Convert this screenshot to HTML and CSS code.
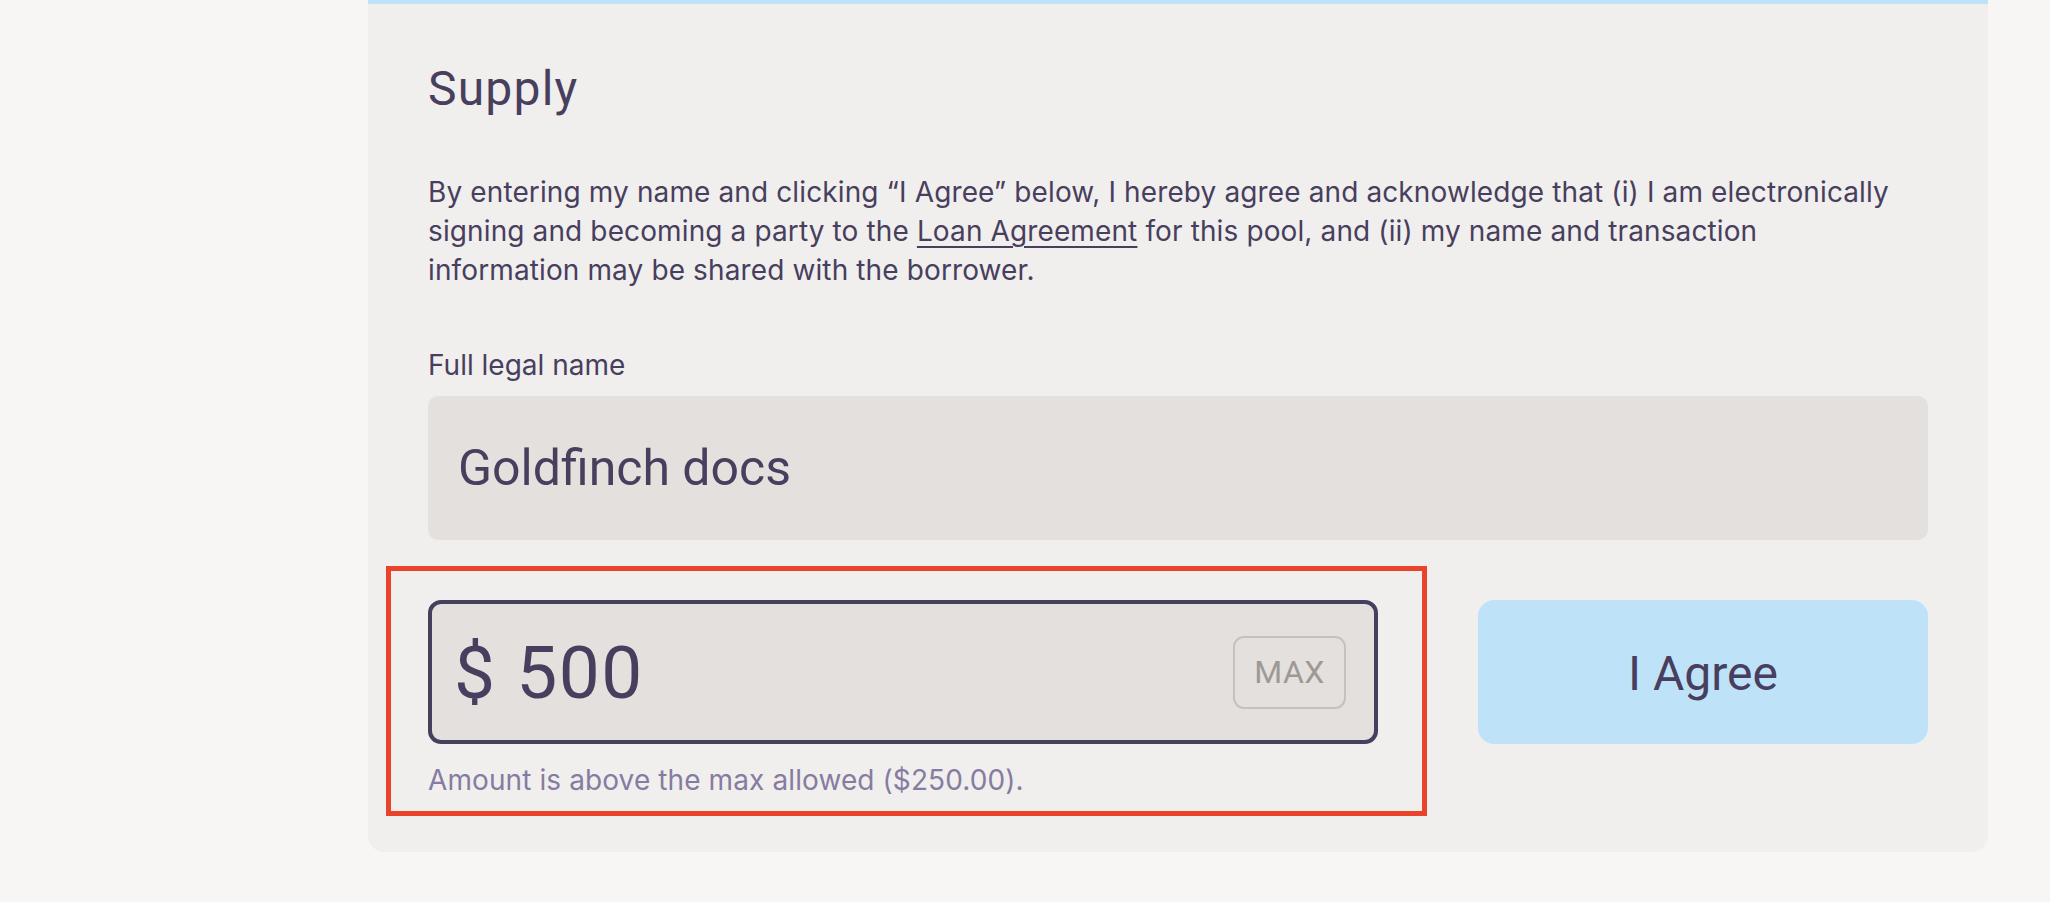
FILE: index.html
```html
<!DOCTYPE html>
<html lang="en">
<head>
<meta charset="utf-8">
<title>Supply</title>
<link rel="stylesheet" href="styles.css">
</head>
<body>
<div class="page">
  <aside class="sidebar"></aside>
  <section class="card">
    <h2 class="card-title">Supply</h2>
    <p class="terms">By entering my name and clicking “I Agree” below, I hereby agree and acknowledge that (i) I am electronically signing and becoming a party to the <a class="terms-link" href="#">Loan Agreement</a> for this pool, and (ii) my name and transaction information may be shared with the borrower.</p>
    <label class="field-label" for="legal-name">Full legal name</label>
    <div class="name-input" id="legal-name">Goldfinch docs</div>
    <div class="amount-row">
      <div class="amount-col highlight">
        <div class="amount-input">
          <span class="amount-value">$ 500</span>
          <span class="max-btn">MAX</span>
        </div>
        <div class="amount-error">Amount is above the max allowed ($250.00).</div>
      </div>
      <div class="agree-btn">I Agree</div>
    </div>
  </section>
</div>
</body>
</html>
```
FILE: styles.css
```css
html, body {
  margin: 0;
  padding: 0;
}
body {
  background: #f7f6f4;
  font-family: Roboto, "Liberation Sans", sans-serif;
  color: #483e5e;
  width: 2050px;
  height: 902px;
  overflow: hidden;
}
.page {
  display: grid;
  grid-template-columns: 368px 1620px;
  align-items: start;
}
.card {
  box-sizing: border-box;
  background: #f0efed;
  border-top: 4px solid #bee3f8;
  border-radius: 0 0 16px 16px;
  padding: 57px 60px 52px 60px;
}
.card-title {
  margin: 0 0 56px 0;
  font-size: 48px;
  line-height: 56px;
  font-weight: 400;
  letter-spacing: 1.2px;
}
.terms {
  margin: 0 0 56px 0;
  max-width: 1478px;
  font-family: Inter, Roboto, sans-serif;
  font-size: 28px;
  line-height: 39px;
  letter-spacing: 0.12px;
}
.terms-link {
  color: inherit;
  text-decoration: underline;
  text-decoration-thickness: 2px;
  text-underline-offset: 5px;
}
.field-label {
  display: block;
  font-family: Inter, Roboto, sans-serif;
  font-size: 28px;
  line-height: 39px;
  margin-bottom: 11px;
}
.name-input {
  box-sizing: border-box;
  height: 144px;
  background: #e3e0dd;
  border-radius: 10px;
  padding: 0 30px;
  display: flex;
  align-items: center;
  font-size: 50px;
}
.amount-row {
  margin-top: 60px;
  display: grid;
  grid-template-columns: 950px 450px;
  column-gap: 100px;
  align-items: start;
}
.amount-col {
  position: relative;
}
.highlight::after {
  content: "";
  position: absolute;
  top: -34px;
  left: -42px;
  right: -49px;
  bottom: -16px;
  border: 5px solid #e9442b;
  pointer-events: none;
}
.amount-input {
  box-sizing: border-box;
  height: 144px;
  background: #e3e0dd;
  border: 4px solid #483e5e;
  border-radius: 13px;
  padding: 0 28px 0 22px;
  display: flex;
  align-items: center;
  justify-content: space-between;
}
.amount-value {
  font-size: 73px;
  letter-spacing: 1.5px;
  line-height: 1;
  padding-top: 3px;
}
.max-btn {
  box-sizing: border-box;
  height: 73px;
  width: 113px;
  border: 2px solid #c6c1bc;
  border-radius: 11px;
  display: flex;
  align-items: center;
  justify-content: center;
  font-size: 32px;
  letter-spacing: 0.5px;
  color: #9e9994;
}
.amount-error {
  margin-top: 17px;
  font-family: Inter, Roboto, sans-serif;
  font-size: 28px;
  letter-spacing: 0.1px;
  line-height: 39px;
  color: #867ca1;
}
.agree-btn {
  box-sizing: border-box;
  height: 144px;
  background: #bee3f9;
  border-radius: 16px;
  display: flex;
  align-items: center;
  justify-content: center;
  font-size: 48px;
  padding-top: 2px;
}
```
